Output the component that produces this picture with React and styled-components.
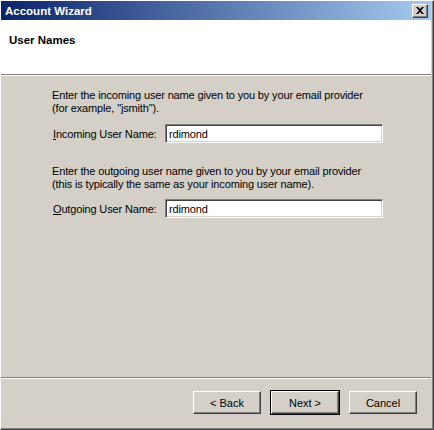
import React from "react";
import styled, { createGlobalStyle } from "styled-components";

const GlobalStyle = createGlobalStyle`
  html, body {
    margin: 0;
    padding: 0;
    background: #d4d0c8;
  }
  body {
    font-family: "Liberation Sans", Arial, sans-serif;
    font-size: 11px;
    color: #000;
  }
`;

const Window = styled.div`
  width: 434px;
  height: 430px;
  box-sizing: border-box;
  background: #d4d0c8;
  border-top: 1px solid #ffffff;
  border-left: 1px solid #ffffff;
  border-right: 1px solid #404040;
  border-bottom: 1px solid #404040;
  box-shadow: inset -1px -1px 0 #808080;
  padding: 0 2px 2px 0;
  display: flex;
  flex-direction: column;
`;

const TitleBar = styled.div`
  height: 19px;
  flex-shrink: 0;
  display: flex;
  align-items: center;
  justify-content: space-between;
  padding: 0 3px 0 4px;
  background: linear-gradient(to right, #0a246a, #a6caf0);
`;

const Title = styled.span`
  color: #fff;
  font-weight: bold;
  font-size: 11.5px;
  font-family: "Liberation Sans", Arial, sans-serif;
`;

const CloseButton = styled.div`
  width: 16px;
  height: 14px;
  box-sizing: border-box;
  background: #d4d0c8;
  border-top: 1px solid #fff;
  border-left: 1px solid #fff;
  border-right: 1px solid #404040;
  border-bottom: 1px solid #404040;
  box-shadow: inset -1px -1px 0 #808080;
  display: flex;
  align-items: center;
  justify-content: center;
`;

const Header = styled.div`
  height: 55px;
  flex-shrink: 0;
  background: #fff;
  border-bottom: 1px solid #808080;
  box-shadow: 0 1px 0 #fff;
  display: flex;
  align-items: flex-start;
  padding: 14px 0 0 8px;
  box-sizing: border-box;
`;

const HeaderTitle = styled.div`
  font-weight: bold;
  font-size: 11.5px;
  font-family: "Liberation Sans", Arial, sans-serif;
`;

const Body = styled.div`
  flex: 1;
  padding: 14px 0 0 51px;
  display: flex;
  flex-direction: column;
  letter-spacing: -0.15px;
`;

const Section = styled.div`
  display: flex;
  flex-direction: column;
  margin-bottom: ${(p) => p.$gap || 0}px;
`;

const Para = styled.p`
  margin: 0;
  line-height: 13px;
  font-size: 11px;
`;

const Field = styled.div`
  display: flex;
  align-items: center;
  margin-top: ${(p) => p.$top}px;
`;

const Label = styled.label`
  width: 112px;
  padding-left: 1px;
  font-size: 11px;
`;

const Input = styled.div`
  width: 218px;
  height: 19px;
  box-sizing: border-box;
  background: #fff;
  border-top: 1px solid #808080;
  border-left: 1px solid #808080;
  border-right: 1px solid #fff;
  border-bottom: 1px solid #fff;
  box-shadow: inset 1px 1px 0 #404040, inset -1px -1px 0 #d4d0c8;
  padding: 0 3px;
  display: flex;
  align-items: center;
  font-size: 11px;
`;

const Footer = styled.div`
  height: 50px;
  flex-shrink: 0;
  border-top: 1px solid #808080;
  box-shadow: inset 0 1px 0 #fff;
  display: flex;
  justify-content: flex-end;
  gap: 10px;
  padding: 13px 14px 0 0;
  box-sizing: border-box;
`;

const Button = styled.button`
  width: 68px;
  height: 23px;
  box-sizing: border-box;
  background: #d4d0c8;
  font-family: "Liberation Sans", Arial, sans-serif;
  font-size: 11px;
  color: #000;
  padding: 0;
  border-top: 1px solid #fff;
  border-left: 1px solid #fff;
  border-right: 1px solid #404040;
  border-bottom: 1px solid #404040;
  box-shadow: inset -1px -1px 0 #808080;
  outline: ${(p) => (p.$default ? "1px solid #000" : "none")};
`;

export default function App() {
  return (
    <>
      <GlobalStyle />
      <Window>
        <TitleBar>
          <Title>Account Wizard</Title>
          <CloseButton>
            <svg width="8" height="7" viewBox="0 0 8 7">
              <path d="M0 0 L2 0 L4 2 L6 0 L8 0 L5 3.5 L8 7 L6 7 L4 5 L2 7 L0 7 L3 3.5 Z" fill="#000" />
            </svg>
          </CloseButton>
        </TitleBar>
        <Header>
          <HeaderTitle>User Names</HeaderTitle>
        </Header>
        <Body>
          <Section $gap={22}>
            <Para>
              Enter the incoming user name given to you by your email provider
              <br />
              (for example, "jsmith").
            </Para>
            <Field $top={9}>
              <Label>
                <u>I</u>ncoming User Name:
              </Label>
              <Input>rdimond</Input>
            </Field>
          </Section>
          <Section>
            <Para>
              Enter the outgoing user name given to you by your email provider
              <br />
              (this is typically the same as your incoming user name).
            </Para>
            <Field $top={8}>
              <Label>
                <u>O</u>utgoing User Name:
              </Label>
              <Input>rdimond</Input>
            </Field>
          </Section>
        </Body>
        <Footer>
          <Button>&lt; Back</Button>
          <Button $default>Next &gt;</Button>
          <Button>Cancel</Button>
        </Footer>
      </Window>
    </>
  );
}
